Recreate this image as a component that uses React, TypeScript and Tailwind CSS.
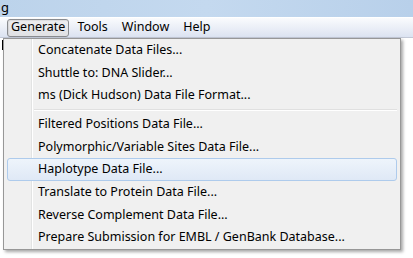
import React from "react";

const groups: string[][] = [
  ["Concatenate Data Files...", "Shuttle to: DNA Slider...", "ms (Dick Hudson) Data File Format..."],
  [
    "Filtered Positions Data File...",
    "Polymorphic/Variable Sites Data File...",
    "Haplotype Data File...",
    "Translate to Protein Data File...",
    "Reverse Complement Data File...",
    "Prepare Submission for EMBL / GenBank Database...",
  ],
];

export default function App() {
  return (
    <div
      className="relative w-[413px] h-[258px] overflow-hidden bg-white text-[12.5px] text-black"
      style={{ fontFamily: '"Noto Sans", "Open Sans", sans-serif' }}
    >
      {/* title bar */}
      <div className="h-[17px] flex items-center pl-[1px] bg-gradient-to-r from-[#bcd3eb] via-[#c4d9ef] to-[#b8d0ea] text-[13px] leading-[17px]">
        <span className="-mt-[3px]">g</span>
      </div>

      {/* menu bar */}
      <div className="h-[21px] flex items-center border-t border-white border-b border-b-[#c2c8d6] bg-gradient-to-b from-[#fafbfd] to-[#dce3f1] pl-[7px]">
        <div className="h-[18px] px-[3px] flex items-center rounded-[3px] border border-[#8a8c90] bg-gradient-to-b from-[#eeeef0] to-[#e0e1e4] shadow-[inset_1px_1px_1px_rgba(0,0,0,0.08)]">
          Generate
        </div>
        <div className="pl-[8px] pr-[7px]">Tools</div>
        <div className="px-[7px]">Window</div>
        <div className="px-[7px]">Help</div>
      </div>

      {/* background window content */}
      <div className="flex">
        <div className="w-[3px] h-[10px] mt-[2px] border-r border-black" />
      </div>

      {/* dropdown menu */}
      <div className="absolute left-[3px] top-[38px] w-[398px] border border-[#979797] bg-[#f0f0f0] shadow-[2px_2px_3px_rgba(0,0,0,0.35)]">
        <div className="absolute left-[27px] top-0 bottom-0 w-[2px] border-l border-[#e2e3e3] border-r border-r-white" />
        {groups.map((g, gi) => (
          <div key={gi}>
            {gi > 0 && (
              <div className="h-[6px] flex items-center pl-[30px] pr-[3px]">
                <div className="w-full h-[2px] border-t border-[#e0e0e0] border-b border-b-white" />
              </div>
            )}
            {g.map((label) => {
              const hot = label.startsWith("Haplotype");
              return (
                <div key={label} className="relative h-[22.7px] flex items-center pl-[34px]">
                  {hot && (
                    <div className="absolute left-[3px] right-[3px] top-0 bottom-0 rounded-[3px] border border-[#aecbec] bg-gradient-to-b from-[#eef4fb] to-[#dfe9f6]" />
                  )}
                  <span className="relative whitespace-nowrap">{label}</span>
                </div>
              );
            })}
          </div>
        ))}
      </div>
    </div>
  );
}
